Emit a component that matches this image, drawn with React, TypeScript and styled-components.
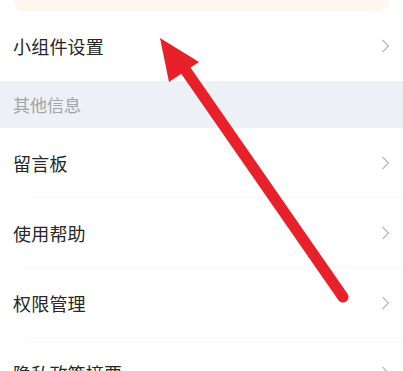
import React from 'react'
import { styled, createGlobalStyle } from 'styled-components'

const GlobalStyle = createGlobalStyle`
    html, body {
        margin: 0;
        padding: 0;
        background: #ffffff;
        font-family: "Noto Sans CJK SC", "Noto Sans", sans-serif;
    }
`

const Page = styled.div`
    position: relative;
    width: 403px;
    height: 371px;
    overflow: hidden;
    background: #ffffff;
`

const TopCard = styled.div`
    height: 11px;
    margin: 0 14px;
    background: #fef6ef;
    border-radius: 0 0 10px 10px;
`

const List = styled.div`
    display: flex;
    flex-direction: column;
`

const Row = styled.div<{ $divider?: boolean }>`
    position: relative;
    height: 70px;
    display: flex;
    align-items: center;
    justify-content: space-between;
    padding: 0 13px 0 13px;
    flex-shrink: 0;
    &::after {
        content: '';
        display: ${props => (props.$divider ? 'block' : 'none')};
        position: absolute;
        left: 28px;
        right: 0;
        bottom: 0;
        height: 1px;
        background: #f6f7f9;
    }
`

const Label = styled.span`
    font-size: 18px;
    color: #262626;
    letter-spacing: 0.2px;
`

const SectionHeader = styled.div`
    height: 47px;
    display: flex;
    align-items: center;
    padding: 0 13px;
    background: #edf0f5;
    font-size: 17px;
    color: #a2a4a8;
`

const Overlay = styled.svg`
    position: absolute;
    left: 0;
    top: 0;
    pointer-events: none;
`

const Chevron = () => (
    <svg width="9" height="14" viewBox="0 0 9 14">
        <polyline
            points="1.5,1 7.5,7 1.5,13"
            fill="none"
            stroke="#b8b8b8"
            strokeWidth="1.2"
        />
    </svg>
)

const items = ['留言板', '使用帮助', '权限管理', '隐私政策摘要']

export default function App() {
    return (
        <Page>
            <GlobalStyle />
            <TopCard />
            <List>
                <Row>
                    <Label>小组件设置</Label>
                    <Chevron />
                </Row>
                <SectionHeader>其他信息</SectionHeader>
                {items.map(item => (
                    <Row key={item} $divider>
                        <Label>{item}</Label>
                        <Chevron />
                    </Row>
                ))}
            </List>
            <Overlay width="403" height="371" viewBox="0 0 403 371">
                <line
                    x1="184"
                    y1="68"
                    x2="343"
                    y2="297"
                    stroke="#e8202a"
                    strokeWidth="11"
                    strokeLinecap="round"
                />
                <polygon points="160,38 199,62 169,82" fill="#e8202a" />
            </Overlay>
        </Page>
    )
}
